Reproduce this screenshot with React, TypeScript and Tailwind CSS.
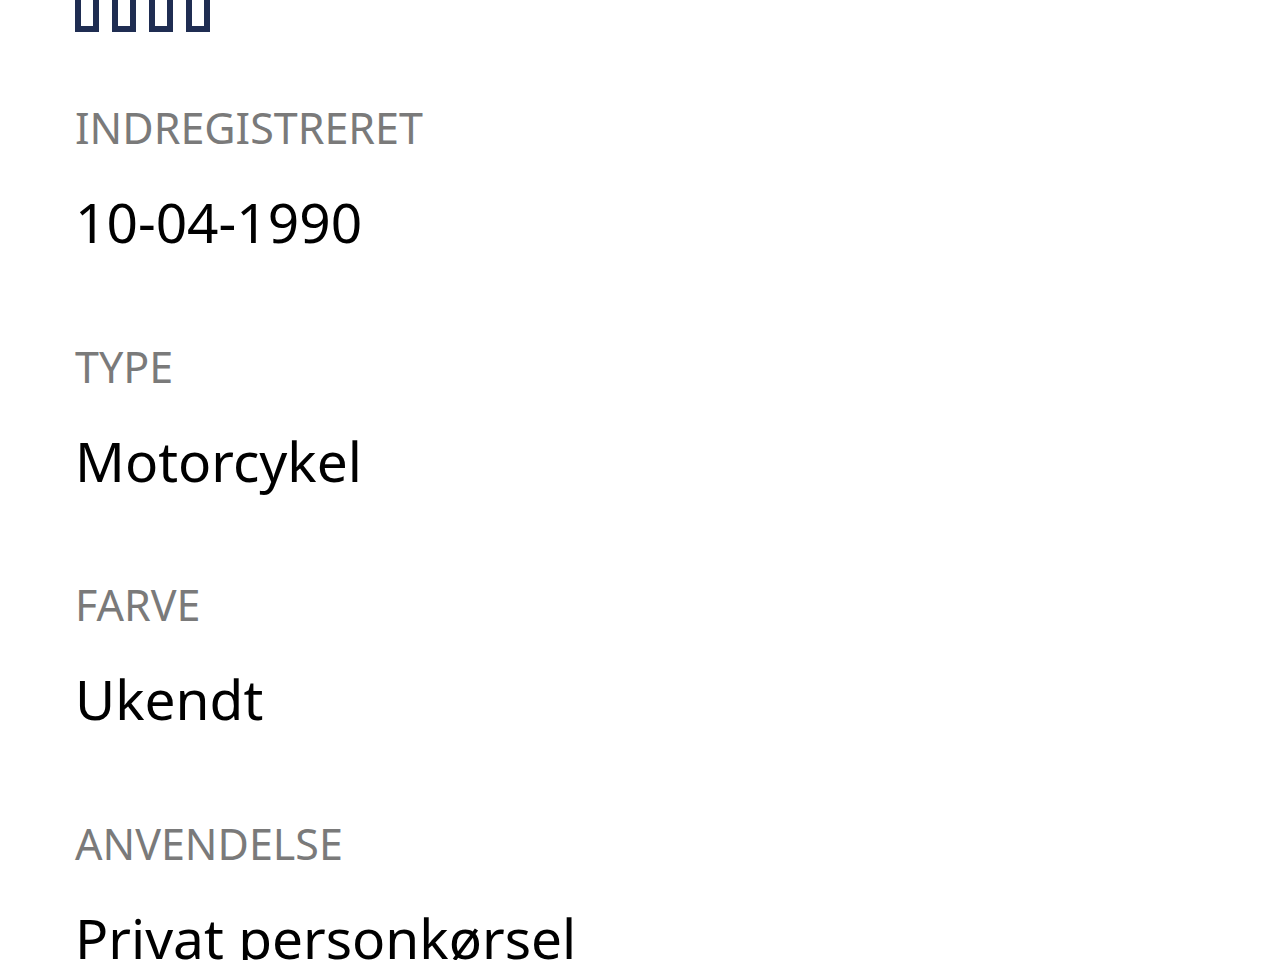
const rows = [
  { label: "INDREGISTRERET", value: "10-04-1990" },
  { label: "TYPE", value: "Motorcykel" },
  { label: "FARVE", value: "Ukendt" },
  { label: "ANVENDELSE", value: "Privat personkørsel" },
];

export default function App() {
  return (
    <div className="min-h-[960px] h-[960px] overflow-hidden bg-white pl-[75px] font-['Noto_Sans',sans-serif]">
      <div className="flex gap-[13px] -mt-[20px]">
        {[0, 1, 2, 3].map((i) => (
          <div key={i} className="w-[24px] h-[52px] border-[6px] border-[#1f2d52]" />
        ))}
      </div>
      <div className="mt-[66px]">
        {rows.map((r) => (
          <div key={r.label} className="pb-[84.5px]">
            <div className="text-[43px] leading-[60px] text-[#7a7a7a]">{r.label}</div>
            <div className="mt-[34px] text-[55px] leading-[60px] text-black">{r.value}</div>
          </div>
        ))}
      </div>
    </div>
  );
}
